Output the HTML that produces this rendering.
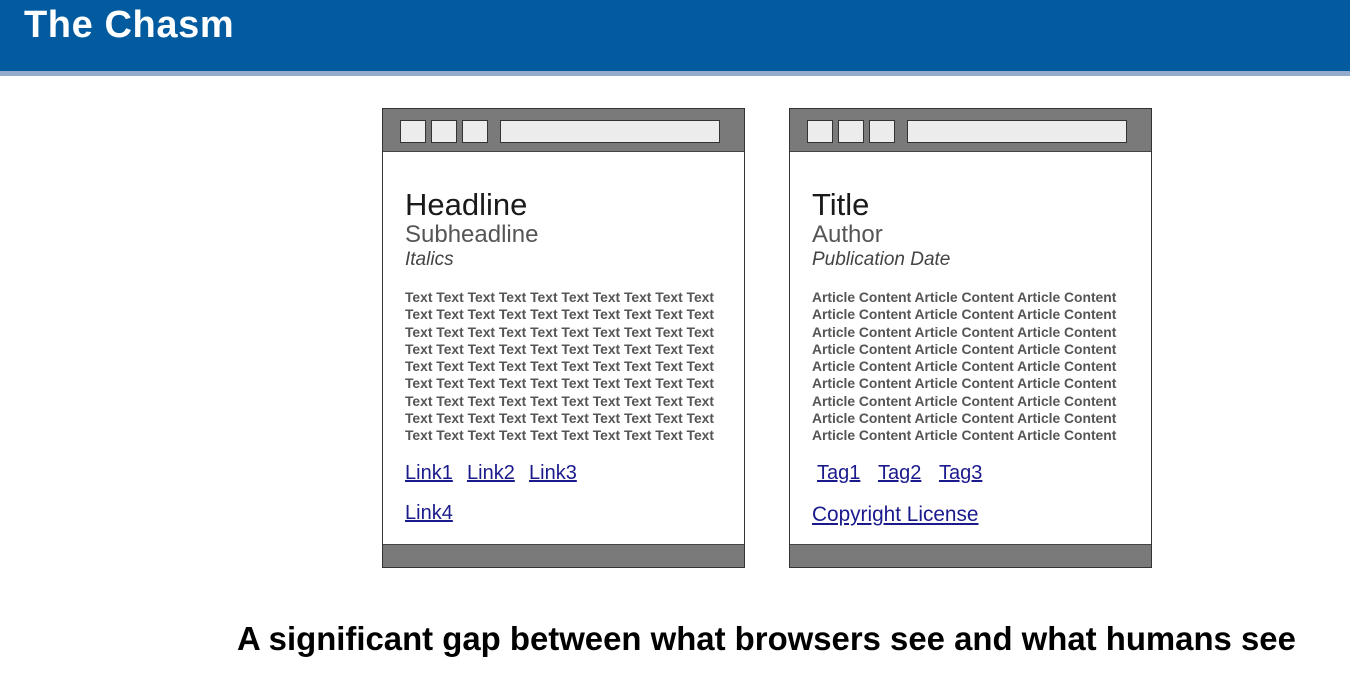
<!DOCTYPE html>
<html><head><meta charset="utf-8"><style>
*{margin:0;padding:0;box-sizing:border-box}
body{width:1350px;height:690px;background:#fff;position:relative;overflow:hidden;font-family:"Liberation Sans",sans-serif}
.hdr{position:absolute;left:0;top:0;width:1350px;height:71px;background:#025a9f}
.strip{position:absolute;left:0;top:71px;width:1350px;height:5px;background:#94abcd}
.title{position:absolute;left:24px;top:4px;color:#fff;font-weight:bold;font-size:38px;letter-spacing:0.6px}
.win{position:absolute;top:108px;width:363px;height:460px;border:1px solid #333;background:#fff}
.bar{position:absolute;left:0;top:0;width:100%;height:43px;background:#7a7a7a;border-bottom:1px solid #444}
.btn{position:absolute;top:11px;width:26px;height:23px;background:#ececec;border:1px solid #333}
.addr{position:absolute;top:11px;left:117px;width:220px;height:23px;background:#ececec;border:1px solid #333}
.foot{position:absolute;left:0;bottom:0;width:100%;height:23px;background:#7a7a7a;border-top:1px solid #444}
.t{position:absolute;left:22px;white-space:nowrap}
.h{top:78px;font-size:31px;color:#1a1a1a}
.s{top:112px;font-size:24px;color:#555}
.i{top:140px;font-size:19px;color:#444;font-style:italic}
.body{top:180px;font-size:13.85px;line-height:17.25px;font-weight:bold;color:#555}
.l{font-size:20px;color:#1a1a8c;text-decoration:underline}
.cap{position:absolute;left:237px;top:620px;font-size:32.9px;font-weight:bold;color:#000;white-space:nowrap}
</style></head><body>
<div class="hdr"></div><div class="strip"></div>
<div class="title">The Chasm</div>

<div class="win" style="left:382px">
<div class="bar"><div class="btn" style="left:17px"></div><div class="btn" style="left:48px"></div><div class="btn" style="left:79px"></div><div class="addr"></div></div>
<div class="t h">Headline</div>
<div class="t s">Subheadline</div>
<div class="t i">Italics</div>
<div class="t body">Text Text Text Text Text Text Text Text Text Text<br>Text Text Text Text Text Text Text Text Text Text<br>Text Text Text Text Text Text Text Text Text Text<br>Text Text Text Text Text Text Text Text Text Text<br>Text Text Text Text Text Text Text Text Text Text<br>Text Text Text Text Text Text Text Text Text Text<br>Text Text Text Text Text Text Text Text Text Text<br>Text Text Text Text Text Text Text Text Text Text<br>Text Text Text Text Text Text Text Text Text Text</div>
<div class="t l" style="top:353px">Link1</div>
<div class="t l" style="top:353px;left:84px">Link2</div>
<div class="t l" style="top:353px;left:146px">Link3</div>
<div class="t l" style="top:393px">Link4</div>
<div class="foot"></div>
</div>

<div class="win" style="left:789px">
<div class="bar"><div class="btn" style="left:17px"></div><div class="btn" style="left:48px"></div><div class="btn" style="left:79px"></div><div class="addr"></div></div>
<div class="t h">Title</div>
<div class="t s">Author</div>
<div class="t i">Publication Date</div>
<div class="t body">Article Content Article Content Article Content<br>Article Content Article Content Article Content<br>Article Content Article Content Article Content<br>Article Content Article Content Article Content<br>Article Content Article Content Article Content<br>Article Content Article Content Article Content<br>Article Content Article Content Article Content<br>Article Content Article Content Article Content<br>Article Content Article Content Article Content</div>
<div class="t l" style="top:353px;left:27px">Tag1</div>
<div class="t l" style="top:353px;left:88px">Tag2</div>
<div class="t l" style="top:353px;left:149px">Tag3</div>
<div class="t l" style="top:394px;font-size:20.8px">Copyright License</div>
<div class="foot"></div>
</div>

<div class="cap">A significant gap between what browsers see and what humans see</div>
</body></html>
